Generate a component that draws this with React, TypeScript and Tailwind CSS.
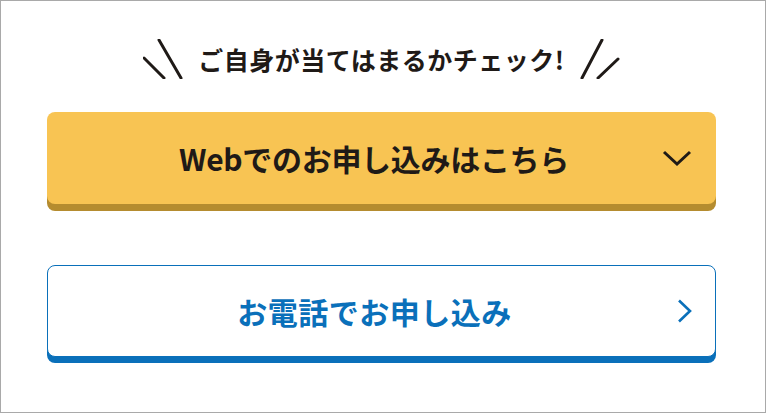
const jp = "font-['Noto_Sans_CJK_JP','Noto_Sans',sans-serif]";

const Slashes: React.FC<{ side: "left" | "right" }> = ({ side }) => (
  <svg width="40" height="40" viewBox="0 0 40 40" className="shrink-0">
    {side === "left" ? (
      <>
        <line x1="1" y1="19" x2="21" y2="39" stroke="#1f1a17" strokeWidth="3" strokeLinecap="round" />
        <line x1="16" y1="1" x2="38" y2="39" stroke="#1f1a17" strokeWidth="3" strokeLinecap="round" />
      </>
    ) : (
      <>
        <line x1="2" y1="39" x2="22" y2="1" stroke="#1f1a17" strokeWidth="3" strokeLinecap="round" />
        <line x1="18" y1="39" x2="38" y2="20" stroke="#1f1a17" strokeWidth="3" strokeLinecap="round" />
      </>
    )}
  </svg>
);

const ChevronDown = () => (
  <svg width="30" height="18" viewBox="0 0 30 18" fill="none">
    <path d="M2 3 L15 15 L28 3" stroke="#1f1a17" strokeWidth="3" />
  </svg>
);

const ChevronRight = () => (
  <svg width="16" height="24" viewBox="0 0 16 24" fill="none">
    <path d="M2 1.5 L13 12 L2 22.5" stroke="#0a70ba" strokeWidth="2.6" />
  </svg>
);

const App = () => {
  return (
    <div className={`flex h-[413px] w-[766px] flex-col border border-[#a9a9a9] bg-white pl-[46px] pr-[49px] pt-[38px] ${jp}`}>
      <div className="flex items-center justify-center gap-[15px]">
        <Slashes side="left" />
        <span className="text-[25px] font-bold leading-none tracking-[0.5px] text-[#1f1a17]">
          ご自身が当てはまるかチェック!
        </span>
        <Slashes side="right" />
      </div>

      <button className="relative mt-[33px] flex h-[92px] w-full items-center justify-center rounded-[8px] bg-[#f8c453] pr-[15px] shadow-[0_7px_0_#b58c2f]">
        <span className="text-[30px] font-bold tracking-[-0.3px] text-[#1f1a17]">
          Webでのお申し込みはこちら
        </span>
        <span className="absolute right-[24px] top-1/2 -translate-y-1/2">
          <ChevronDown />
        </span>
      </button>

      <button className="relative mt-[61px] flex h-[92px] w-full items-center justify-center rounded-[8px] border border-[#0a70ba] bg-white pr-[14px] shadow-[0_6px_0_#0a70ba]">
        <span className="text-[30px] font-bold tracking-[0.5px] text-[#0a70ba]">
          お電話でお申し込み
        </span>
        <span className="absolute right-[22px] top-1/2 -translate-y-1/2">
          <ChevronRight />
        </span>
      </button>
    </div>
  );
};

export default App;
